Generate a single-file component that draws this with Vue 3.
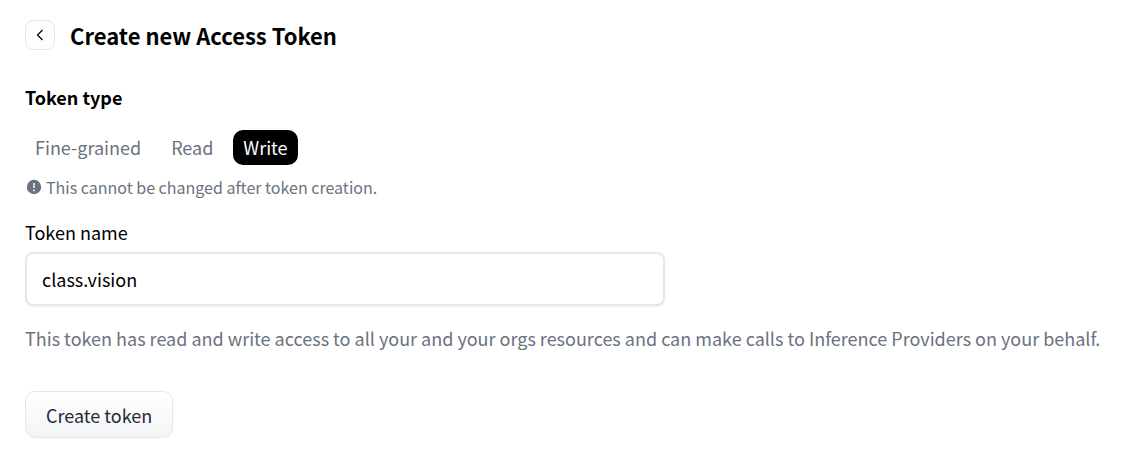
<script setup>
import { ref } from 'vue'

const types = ['Fine-grained', 'Read', 'Write']
const selected = ref('Write')
const name = ref('class.vision')
</script>

<template>
  <main class="page">
    <header class="header">
      <button class="back" type="button" aria-label="Back">
        <svg viewBox="0 0 12 12" width="12" height="12" fill="none" stroke="currentColor" stroke-width="1.2">
          <path d="M8.5 1 3.5 6l5 5" />
        </svg>
      </button>
      <h1>Create new Access Token</h1>
    </header>
    <form class="form" @submit.prevent>
      <h2>Token type</h2>
      <div class="tabs">
        <button
          v-for="type in types"
          :key="type"
          type="button"
          class="tab"
          :class="{ active: type === selected }"
          :aria-pressed="type === selected"
          @click="selected = type"
        >{{ type }}</button>
      </div>
      <p class="note">
        <svg viewBox="0 0 16 16" width="16" height="16" aria-hidden="true">
          <circle cx="8" cy="8" r="7.2" fill="currentColor" />
          <path d="M7.3 3.9h1.4v5.2H7.3z" fill="#fff" />
          <circle cx="8" cy="11.4" r="0.9" fill="#fff" />
        </svg>
        <span>This cannot be changed after token creation.</span>
      </p>
      <label class="label" for="token-name">Token name</label>
      <input id="token-name" v-model="name" class="field" type="text" />
      <p class="description">This token has read and write access to all your and your orgs resources and can make calls to Inference Providers on your behalf.</p>
      <button class="submit" type="submit">Create token</button>
    </form>
  </main>
</template>

<style>
body {
  background: #fff;
}
</style>

<style scoped>
.page {
  padding: 20px 12px 20px 25px;
  color: #000;
  font-family: "Noto Sans CJK SC", sans-serif;
  font-size: 18px;
  line-height: 28px;
}
.page * {
  box-sizing: border-box;
}
button,
input {
  font: inherit;
  margin: 0;
}
button {
  cursor: pointer;
}
h1,
h2,
p {
  margin: 0;
}
.header {
  display: flex;
  align-items: center;
  gap: 15px;
}
.back {
  display: flex;
  align-items: center;
  justify-content: center;
  width: 30px;
  height: 30px;
  padding: 0;
  border: 1px solid #e5e7eb;
  border-radius: 8px;
  background: #fdfdfe;
  color: #000;
}
h1 {
  font-size: 22px;
  line-height: 28px;
  font-weight: 700;
}
.form {
  display: flex;
  flex-direction: column;
  align-items: flex-start;
  margin-top: 33px;
}
h2 {
  font-size: 18px;
  line-height: 28px;
  font-weight: 600;
}
.tabs {
  display: flex;
  gap: 10px;
  margin-top: 19px;
}
.tab {
  height: 35px;
  padding: 0 10px 2px;
  border: 0;
  border-radius: 10px;
  background: transparent;
  color: #6b7280;
}
.tab.active {
  background: #000;
  color: #fff;
}
.note {
  display: flex;
  align-items: center;
  gap: 4px;
  margin-top: 10px;
  padding-left: 1px;
  color: #6b7280;
  font-size: 16px;
  line-height: 24px;
}
.label {
  margin-top: 19px;
}
.field {
  width: 100%;
  max-width: 640px;
  height: 54px;
  margin-top: 6px;
  padding: 0 15px;
  border: 2px solid #e5e7eb;
  border-radius: 8px;
  background: #fff;
  color: #000;
  box-shadow: 0 1px 2px rgba(0, 0, 0, 0.05);
}
.description {
  margin-top: 18px;
  color: #6b7280;
}
.submit {
  height: 47px;
  margin-top: 39px;
  padding: 0 20px;
  border: 1px solid #e5e7eb;
  border-radius: 10px;
  background: linear-gradient(to bottom, #fff, #f3f4f6);
  color: #1f2937;
}
</style>
